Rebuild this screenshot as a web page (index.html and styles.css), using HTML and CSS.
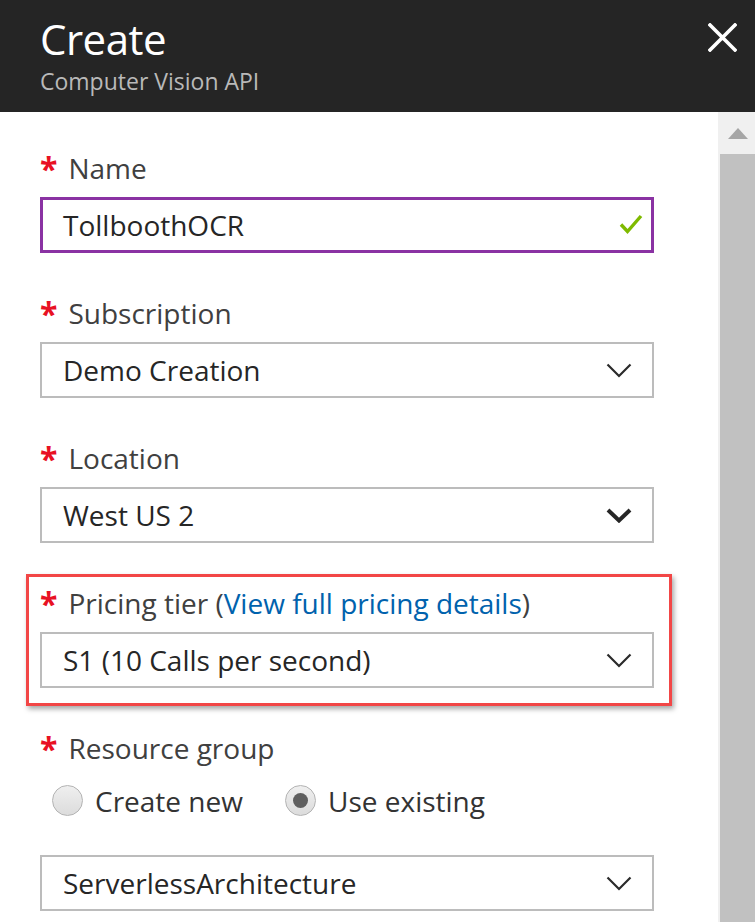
FILE: index.html
```html
<!DOCTYPE html>
<html lang="en">
<head>
<meta charset="utf-8">
<title>Create - Computer Vision API</title>
<link rel="stylesheet" href="styles.css">
</head>
<body>
<div class="blade">
  <header class="blade-header">
    <div class="titles">
      <h1 class="title">Create</h1>
      <div class="subtitle">Computer Vision API</div>
    </div>
    <button class="close" aria-label="Close">
      <svg width="29" height="29" viewBox="0 0 29 29"><path d="M2 2 L27 27 M27 2 L2 27" stroke="#fff" stroke-width="3.6" stroke-linecap="square" fill="none"/></svg>
    </button>
  </header>
  <div class="body">
    <main class="content">
      <div class="field">
        <div class="label"><span class="req">*</span>Name</div>
        <div class="box valid">
          <span class="value">TollboothOCR</span>
          <svg class="check" width="24" height="22" viewBox="0 0 24 22"><path d="M2 11.5 L8.5 18.5 L22 3" stroke="#7fba00" stroke-width="3.4" fill="none"/></svg>
        </div>
      </div>
      <div class="field">
        <div class="label"><span class="req">*</span>Subscription</div>
        <div class="box">
          <span class="value">Demo Creation</span>
          <svg class="chev" width="26" height="15" viewBox="0 0 26 15"><path d="M1.5 1.5 L13 13 L24.5 1.5" stroke="#2b2b2b" stroke-width="2.2" fill="none"/></svg>
        </div>
      </div>
      <div class="field">
        <div class="label"><span class="req">*</span>Location</div>
        <div class="box">
          <span class="value">West US 2</span>
          <svg class="chev" width="26" height="15" viewBox="0 0 26 15"><path d="M2 2 L13 12.5 L24 2" stroke="#262626" stroke-width="4" fill="none"/></svg>
        </div>
      </div>
      <div class="field highlight">
        <div class="label"><span class="req">*</span>Pricing tier (<a class="link" href="#">View full pricing details</a>)</div>
        <div class="box">
          <span class="value">S1 (10 Calls per second)</span>
          <svg class="chev" width="26" height="15" viewBox="0 0 26 15"><path d="M1.5 1.5 L13 13 L24.5 1.5" stroke="#2b2b2b" stroke-width="2.2" fill="none"/></svg>
        </div>
      </div>
      <div class="field">
        <div class="label"><span class="req">*</span>Resource group</div>
        <div class="radios">
          <label class="radio-opt first"><span class="radio"></span>Create new</label>
          <label class="radio-opt"><span class="radio checked"></span>Use existing</label>
        </div>
        <div class="box">
          <span class="value">ServerlessArchitecture</span>
          <svg class="chev" width="26" height="15" viewBox="0 0 26 15"><path d="M1.5 1.5 L13 13 L24.5 1.5" stroke="#2b2b2b" stroke-width="2.2" fill="none"/></svg>
        </div>
      </div>
    </main>
    <aside class="scrollbar">
      <div class="scroll-up"><span class="tri"></span></div>
      <div class="thumb"></div>
    </aside>
  </div>
</div>
</body>
</html>
```
FILE: styles.css
```css
* { box-sizing: border-box; }
html, body {
  margin: 0;
  padding: 0;
  background: #fff;
}
body {
  width: 755px;
  height: 922px;
  overflow: hidden;
  font-family: "Open Sans", "Noto Sans", "Liberation Sans", sans-serif;
}
.blade {
  display: flex;
  flex-direction: column;
  height: 922px;
}
.blade-header {
  height: 112px;
  flex: none;
  background: #252525;
  display: flex;
  justify-content: space-between;
  align-items: flex-start;
  padding: 14px 18px 0 40px;
}
.title {
  margin: 0;
  font-size: 42px;
  line-height: 50px;
  font-weight: 400;
  color: #ffffff;
  letter-spacing: -0.5px;
}
.subtitle {
  margin-top: 3px;
  font-size: 23px;
  line-height: 28px;
  color: #b9b9b9;
}
.close {
  margin-top: 9px;
  padding: 0;
  border: 0;
  background: none;
  width: 29px;
  height: 29px;
  display: block;
}
.close svg { display: block; }
.body {
  flex: 1;
  display: flex;
  min-height: 0;
}
.content {
  width: 718px;
  flex: none;
  padding: 38px 64px 0 40px;
}
.field {
  margin-bottom: 42px;
}
.label {
  height: 36px;
  font-size: 28px;
  line-height: 36px;
  color: #404040;
  margin-bottom: 11px;
  white-space: nowrap;
}
.req {
  display: inline-block;
  height: 36px;
  line-height: 36px;
  vertical-align: top;
  color: #e81123;
  font-size: 32px;
  font-weight: 700;
  margin-right: 11px;
  position: relative;
  top: 1px;
}
.link {
  color: #0062ad;
  text-decoration: none;
}
.box {
  height: 56px;
  border: 2px solid #bcbcbc;
  display: flex;
  align-items: center;
  justify-content: space-between;
  padding: 0 20px 0 21px;
}
.box.valid {
  border: 3px solid #8a32a3;
  padding: 0 8px 0 20px;
}
.value {
  font-size: 28px;
  line-height: 36px;
  color: #262626;
  white-space: nowrap;
}
.check { display: block; margin-top: -2px; }
.chev { display: block; }
.highlight {
  margin: -11px -18px 24px -14px;
  padding: 8px 15px 15px 11px;
  border: 3px solid #f24646;
  box-shadow: 2px 3px 5px rgba(0, 0, 0, 0.35);
}
.radios {
  display: flex;
  align-items: center;
  height: 31px;
  margin: 19px 0 39px 12px;
}
.radio-opt {
  display: flex;
  align-items: center;
  gap: 12px;
  font-size: 28px;
  color: #333;
}
.radio-opt.first {
  width: 233px;
}
.radio {
  width: 31px;
  height: 31px;
  border-radius: 50%;
  border: 1px solid #b3b3b3;
  background: linear-gradient(#efefef, #dcdcdc);
  display: flex;
  align-items: center;
  justify-content: center;
}
.radio.checked::after {
  content: "";
  width: 15px;
  height: 15px;
  border-radius: 50%;
  background: #5f5f5f;
}
.scrollbar {
  width: 37px;
  flex: none;
  background: #f0f0f0;
  display: flex;
  flex-direction: column;
  padding-left: 2px;
}
.scroll-up {
  height: 42px;
  flex: none;
  display: flex;
  justify-content: center;
  padding-top: 16px;
}
.tri {
  width: 0;
  height: 0;
  border-left: 10px solid transparent;
  border-right: 10px solid transparent;
  border-bottom: 11px solid #a6a6a6;
}
.thumb {
  flex: 1;
  background: #c1c1c1;
}
```
